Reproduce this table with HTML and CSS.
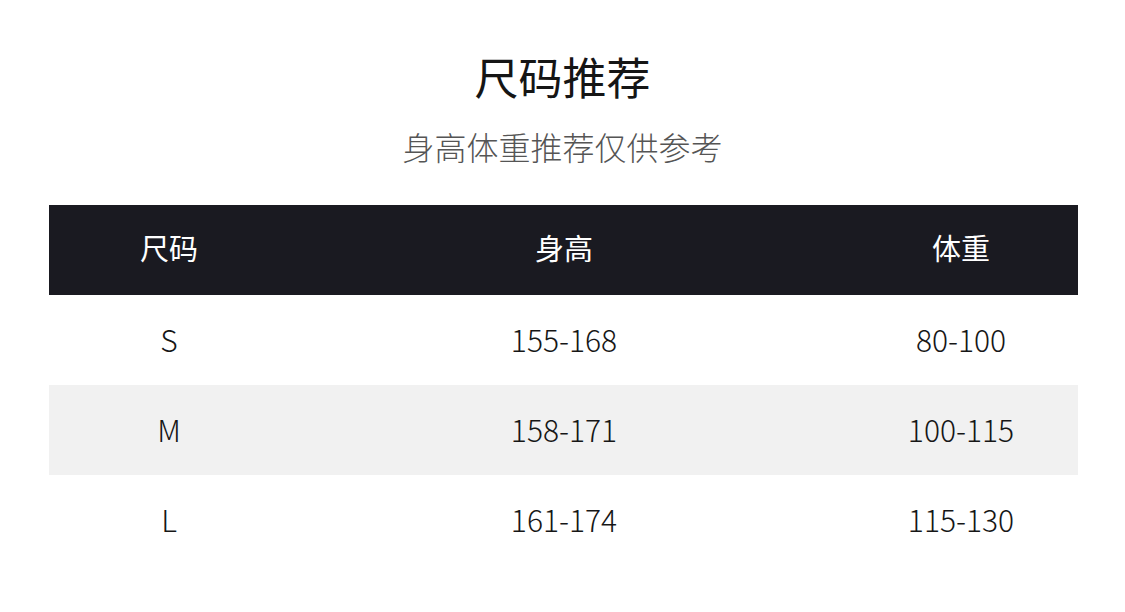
FILE: index.html
```html
<!DOCTYPE html>
<html lang="zh-CN">
<head>
<meta charset="utf-8">
<title>尺码推荐</title>
<link rel="stylesheet" href="styles.css">
</head>
<body>
<div class="page">
  <header class="head">
    <h1 class="title">尺码推荐</h1>
    <p class="subtitle">身高体重推荐仅供参考</p>
  </header>
  <div class="table">
    <div class="row row-head">
      <div class="cell c1">尺码</div>
      <div class="cell c2">身高</div>
      <div class="cell c3">体重</div>
    </div>
    <div class="row">
      <div class="cell c1">S</div>
      <div class="cell c2">155-168</div>
      <div class="cell c3">80-100</div>
    </div>
    <div class="row row-alt">
      <div class="cell c1">M</div>
      <div class="cell c2">158-171</div>
      <div class="cell c3">100-115</div>
    </div>
    <div class="row">
      <div class="cell c1">L</div>
      <div class="cell c2">161-174</div>
      <div class="cell c3">115-130</div>
    </div>
  </div>
</div>
</body>
</html>
```
FILE: styles.css
```css
html, body {
  margin: 0;
  padding: 0;
  background: #ffffff;
}
body {
  font-family: "Noto Sans CJK SC", sans-serif;
  color: #141414;
}
.page {
  width: 1125px;
  height: 612px;
  overflow: hidden;
}
.head {
  display: flex;
  flex-direction: column;
  align-items: center;
  padding-top: 46px;
}
.title {
  margin: 0;
  font-weight: 400;
  font-size: 44px;
  line-height: 60px;
  color: #151515;
}
.subtitle {
  margin: 18px 0 0;
  font-size: 32px;
  font-weight: 300;
  line-height: 44px;
  color: #555555;
}
.table {
  margin: 37px 47px 0 49px;
  display: flex;
  flex-direction: column;
}
.row {
  display: grid;
  grid-template-columns: 240px 1fr 234px;
  height: 90px;
  align-items: center;
  font-size: 30px;
  font-weight: 300;
  color: #161616;
  padding-bottom: 2px;
  box-sizing: border-box;
}
.row-head {
  background: #1a1a21;
  color: #ffffff;
  font-size: 29px;
  font-weight: 400;
  padding-bottom: 6px;
}
.row-alt {
  background: #f1f1f1;
}
.cell {
  text-align: center;
}
.c2 {
  padding-right: 5px;
}
```
